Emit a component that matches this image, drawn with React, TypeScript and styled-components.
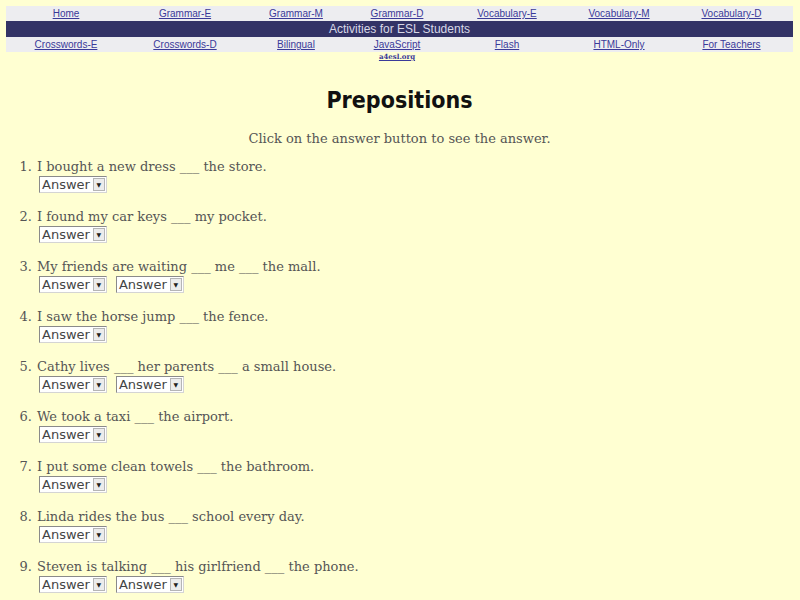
import React from "react";
import styled, { createGlobalStyle } from "styled-components";

const GlobalStyle = createGlobalStyle`
  html, body {
    margin: 0;
    padding: 0;
    background: #ffffd2;
  }
  body {
    font-family: "DejaVu Serif", serif;
    color: #555555;
  }
`;

const topLinks = [
  "Home",
  "Grammar-E",
  "Grammar-M",
  "Grammar-D",
  "Vocabulary-E",
  "Vocabulary-M",
  "Vocabulary-D",
];

const bottomLinks = [
  "Crosswords-E",
  "Crosswords-D",
  "Bilingual",
  "JavaScript",
  "Flash",
  "HTML-Only",
  "For Teachers",
];

type Question = { text: string; blanks: number };

const questions: Question[] = [
  { text: "I bought a new dress ___ the store.", blanks: 1 },
  { text: "I found my car keys ___ my pocket.", blanks: 1 },
  { text: "My friends are waiting ___ me ___ the mall.", blanks: 2 },
  { text: "I saw the horse jump ___ the fence.", blanks: 1 },
  { text: "Cathy lives ___ her parents ___ a small house.", blanks: 2 },
  { text: "We took a taxi ___ the airport.", blanks: 1 },
  { text: "I put some clean towels ___ the bathroom.", blanks: 1 },
  { text: "Linda rides the bus ___ school every day.", blanks: 1 },
  { text: "Steven is talking ___ his girlfriend ___ the phone.", blanks: 2 },
];

// table cells in the original are sized by content, not evenly
const navColumns = "120fr 118fr 104fr 98fr 122fr 102fr 123fr";

const Page = styled.div`
  padding: 6px 7px 0 6px;
`;

const Nav = styled.nav`
  display: flex;
  flex-direction: column;
`;

const LinkRow = styled.div`
  display: grid;
  grid-template-columns: ${navColumns};
  background: #ededf0;
  height: 15px;
  align-items: center;
`;

const NavLink = styled.a`
  font-family: "Liberation Sans", Arial, sans-serif;
  font-size: 10px;
  color: #3a3a99;
  text-decoration: underline;
  text-align: center;
  line-height: 15px;
`;

const Banner = styled.div`
  background: #333366;
  color: #d8d8e6;
  font-family: "Liberation Sans", Arial, sans-serif;
  font-size: 12px;
  text-align: center;
  height: 16px;
  line-height: 16px;
`;

const SiteCell = styled.div`
  display: grid;
  grid-template-columns: ${navColumns};
`;

const SiteLink = styled.a`
  grid-column: 4;
  text-align: center;
  font-family: "DejaVu Serif", serif;
  font-size: 7px;
  font-weight: bold;
  color: #3a3a99;
  text-decoration: underline;
  line-height: 9px;
`;

const Title = styled.h1`
  margin: 23px 0 0;
  text-align: center;
  font-family: "DejaVu Sans Condensed", "DejaVu Sans", sans-serif;
  font-weight: bold;
  font-size: 23px;
  color: #111111;
  line-height: 32px;
`;

const Instructions = styled.p`
  margin: 14px 0 0;
  text-align: center;
  font-size: 13px;
  line-height: 18px;
`;

const List = styled.ol`
  margin: 10px 0 0;
  padding: 0 0 0 30px;
  font-size: 13px;
  line-height: 18px;
`;

const Item = styled.li`
  padding-left: 1px;
  margin-bottom: 15px;
`;

const Selects = styled.div`
  display: flex;
  gap: 9px;
  padding-left: 2px;
`;

const SelectBox = styled.div`
  display: inline-flex;
  align-items: stretch;
  height: 17px;
  background: #ffffff;
  border-top: 1px solid #8a8a8a;
  border-left: 1px solid #8a8a8a;
  border-right: 1px solid #d4d4d4;
  border-bottom: 1px solid #d4d4d4;
  box-sizing: border-box;
`;

const SelectText = styled.span`
  font-family: "DejaVu Sans", sans-serif;
  font-size: 13px;
  line-height: 15px;
  padding: 0 2px 0 2px;
  color: #444444;
`;

const Arrow = styled.span`
  width: 12px;
  margin: 1px;
  background: #ececec;
  border: 1px solid #b5b5b5;
  box-sizing: border-box;
  display: flex;
  align-items: center;
  justify-content: center;
  font-size: 6px;
  color: #222;
`;

const AnswerSelect: React.FC = () => (
  <SelectBox>
    <SelectText>Answer</SelectText>
    <Arrow>▼</Arrow>
  </SelectBox>
);

export default function App() {
  return (
    <>
      <GlobalStyle />
      <Page>
        <Nav>
          <LinkRow>
            {topLinks.map((l) => (
              <NavLink key={l} href="#">
                {l}
              </NavLink>
            ))}
          </LinkRow>
          <Banner>Activities for ESL Students</Banner>
          <LinkRow>
            {bottomLinks.map((l) => (
              <NavLink key={l} href="#">
                {l}
              </NavLink>
            ))}
          </LinkRow>
          <SiteCell>
            <SiteLink href="#">a4esl.org</SiteLink>
          </SiteCell>
        </Nav>
        <Title>Prepositions</Title>
        <Instructions>Click on the answer button to see the answer.</Instructions>
        <List>
          {questions.map((q) => (
            <Item key={q.text}>
              {q.text}
              <Selects>
                {Array.from({ length: q.blanks }).map((_, i) => (
                  <AnswerSelect key={i} />
                ))}
              </Selects>
            </Item>
          ))}
        </List>
      </Page>
    </>
  );
}
